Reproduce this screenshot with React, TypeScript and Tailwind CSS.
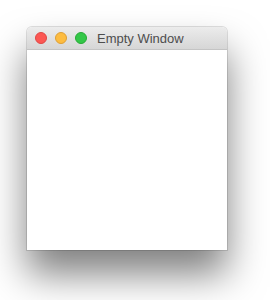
export default function App() {
  return (
    <div className="w-[270px] h-[300px] bg-white pl-[27px] pt-[27px]">
      <div className="w-[200px] h-[223px] flex flex-col rounded-t-[5px] bg-white shadow-[0_0_0_1px_rgba(0,0,0,0.12),0_24px_38px_rgba(0,0,0,0.5)]">
        {/* title bar */}
        <div className="h-[23px] flex items-center pl-[8px] rounded-t-[5px] bg-gradient-to-b from-[#ececec] to-[#d6d6d6] border-b border-[#c4c4c4]">
          <div className="flex gap-[8px]">
            <span className="w-[12px] h-[12px] rounded-full bg-[#fc5753] border border-[#df4744]" />
            <span className="w-[12px] h-[12px] rounded-full bg-[#fdbc40] border border-[#de9f34]" />
            <span className="w-[12px] h-[12px] rounded-full bg-[#33c748] border border-[#27aa35]" />
          </div>
          <span
            className="ml-[10px] text-[13px] leading-none text-[#4d4d4d]"
            style={{ fontFamily: '"Liberation Sans", Arial, sans-serif' }}
          >
            Empty Window
          </span>
        </div>
        <div className="flex-1 bg-white" />
      </div>
    </div>
  );
}
